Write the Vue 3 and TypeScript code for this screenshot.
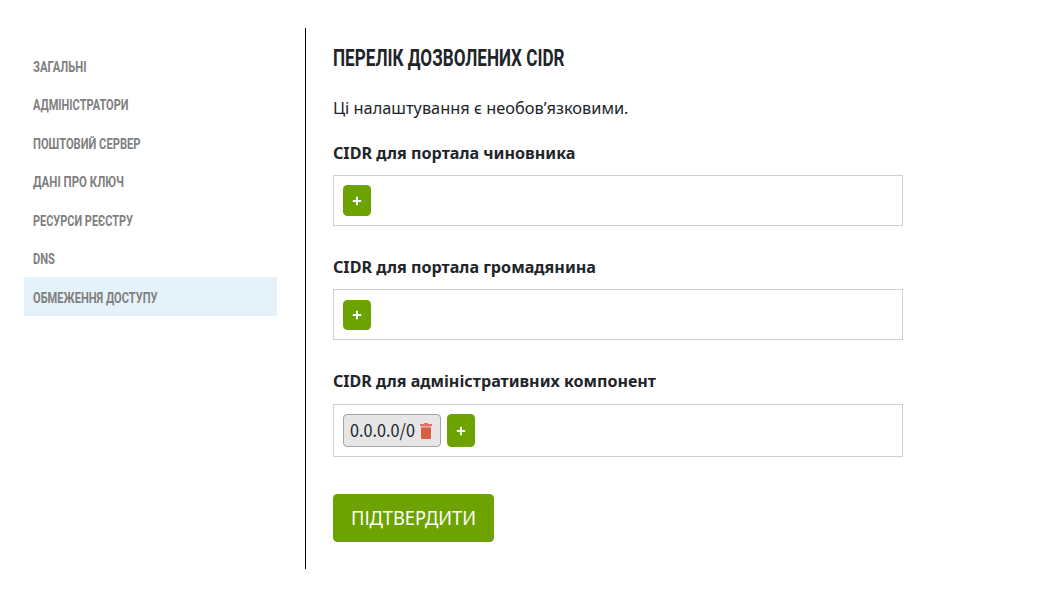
<script setup lang="ts">
import { h, ref } from 'vue'

interface NavItem { title: string; width: number }
interface Section { title: string; width: number; entries: string[] }

// Single line of text fitted to a given width; the font is inherited from the parent.
const FitText = (props: { text: string; width: number; line: number; base: number }) =>
  h('svg', { width: props.width, height: props.line, class: 'fit' }, [
    h('text', {
      x: 0,
      y: props.base,
      textLength: props.width,
      lengthAdjust: 'spacingAndGlyphs',
      fill: 'currentColor',
    }, props.text),
  ])
FitText.props = ['text', 'width', 'line', 'base']

const nav: NavItem[] = [
  { title: 'ЗАГАЛЬНІ', width: 53.5 },
  { title: 'АДМІНІСТРАТОРИ', width: 95.5 },
  { title: 'ПОШТОВИЙ СЕРВЕР', width: 107.5 },
  { title: 'ДАНІ ПРО КЛЮЧ', width: 91 },
  { title: 'РЕСУРСИ РЕЄСТРУ', width: 100 },
  { title: 'DNS', width: 22 },
  { title: 'ОБМЕЖЕННЯ ДОСТУПУ', width: 124.5 },
]
const active = ref(6)

const sections = ref<Section[]>([
  { title: 'CIDR для портала чиновника', width: 242.5, entries: [] },
  { title: 'CIDR для портала громадянина', width: 263, entries: [] },
  { title: 'CIDR для адміністративних компонент', width: 323, entries: ['0.0.0.0/0'] },
])
</script>

<template>
  <div class="page">
    <nav class="side">
      <a
        v-for="(item, i) in nav"
        :key="item.title"
        class="link"
        :class="{ active: i === active }"
        @click="active = i"
      >
        <FitText :text="item.title" :width="item.width" :line="38" :base="26" />
      </a>
    </nav>
    <main class="content">
      <h1 class="title"><FitText text="ПЕРЕЛІК ДОЗВОЛЕНИХ CIDR" :width="231.5" :line="36" :base="26" /></h1>
      <p class="note"><FitText text="Ці налаштування є необов’язковими." :width="295.5" :line="27" :base="20" /></p>
      <section v-for="s in sections" :key="s.title" class="group">
        <h2 class="label"><FitText :text="s.title" :width="s.width" :line="27" :base="20" /></h2>
        <div class="box" :class="{ filled: s.entries.length > 0 }">
          <span v-for="e in s.entries" :key="e" class="chip">
            <FitText :text="e" :width="65" :line="31" :base="22" />
            <svg class="trash" width="12" height="16" viewBox="0 0 12 16">
              <path d="M0 1h4V0h4v1h4v2H0z" fill="#e0725f" />
              <path d="M1 4.3h10V15a1 1 0 0 1-1 1H2a1 1 0 0 1-1-1z" fill="#d95c45" />
              <path d="M1 3h10v1.3H1z" fill="#e5aaa0" />
            </svg>
          </span>
          <button class="add" type="button" aria-label="Додати">
            <svg width="10" height="10" viewBox="0 0 10 10"><path d="M5 .8v8.4M.8 5h8.4" stroke="#fff" stroke-width="2" /></svg>
          </button>
        </div>
      </section>
      <button class="submit" type="button"><FitText text="ПІДТВЕРДИТИ" :width="125" :line="48" :base="31" /></button>
    </main>
  </div>
</template>

<style>
body {
  margin: 0;
  background: #fff;
}
</style>

<style scoped>
.page {
  box-sizing: border-box;
  display: flex;
  height: 596px;
  padding: 28px 24px 27px;
  color: #212529;
  font-family: "Noto Sans", sans-serif;
}
.fit {
  display: block;
  overflow: visible;
}
.side {
  box-sizing: border-box;
  width: 282px;
  padding: 17.7px 28px 0 0;
  border-right: 1px solid #000;
}
.link {
  display: block;
  height: 38.5px;
  padding-left: 9px;
  color: #7f7f7f;
  font: 700 15.5px Roboto, sans-serif;
  cursor: pointer;
}
.link.active {
  height: 39px;
  background: #e5f2fa;
}
.content {
  width: 570px;
  padding-left: 27px;
}
.title {
  margin: 12px 0 18px;
  font: 700 23.8px Roboto, sans-serif;
}
.note {
  margin: 0 0 18px;
  font-size: 16.6px;
}
.group {
  margin-bottom: 27px;
}
.label {
  margin: 0 0 9.2px;
  font-size: 16.6px;
  font-weight: 700;
}
.box {
  box-sizing: border-box;
  display: flex;
  align-items: stretch;
  gap: 6px;
  height: 51px;
  padding: 9.2px 9px 9px;
  border: 1px solid #ceced9;
}
.box.filled {
  height: 53px;
}
.chip {
  box-sizing: border-box;
  display: flex;
  align-items: center;
  justify-content: space-between;
  width: 98px;
  padding: 1.6px 8px 0 6px;
  border: 1px solid #a5a5a5;
  border-radius: 4px;
  background: #e6e6e6;
  font: 17.6px/31px "Noto Sans CJK SC", "Noto Sans", sans-serif;
}
.add {
  display: flex;
  align-items: center;
  justify-content: center;
  width: 28px;
  padding: 1px 0 0;
  border: 0;
  border-radius: 4.5px;
  background: #6ca300;
}
.submit {
  display: block;
  width: 161px;
  height: 48px;
  margin-top: 37px;
  padding: 0 18px;
  border: 0;
  border-radius: 4.5px;
  background: #6ca300;
  color: #fff;
  font: 400 19.4px "Noto Sans", sans-serif;
}
</style>
